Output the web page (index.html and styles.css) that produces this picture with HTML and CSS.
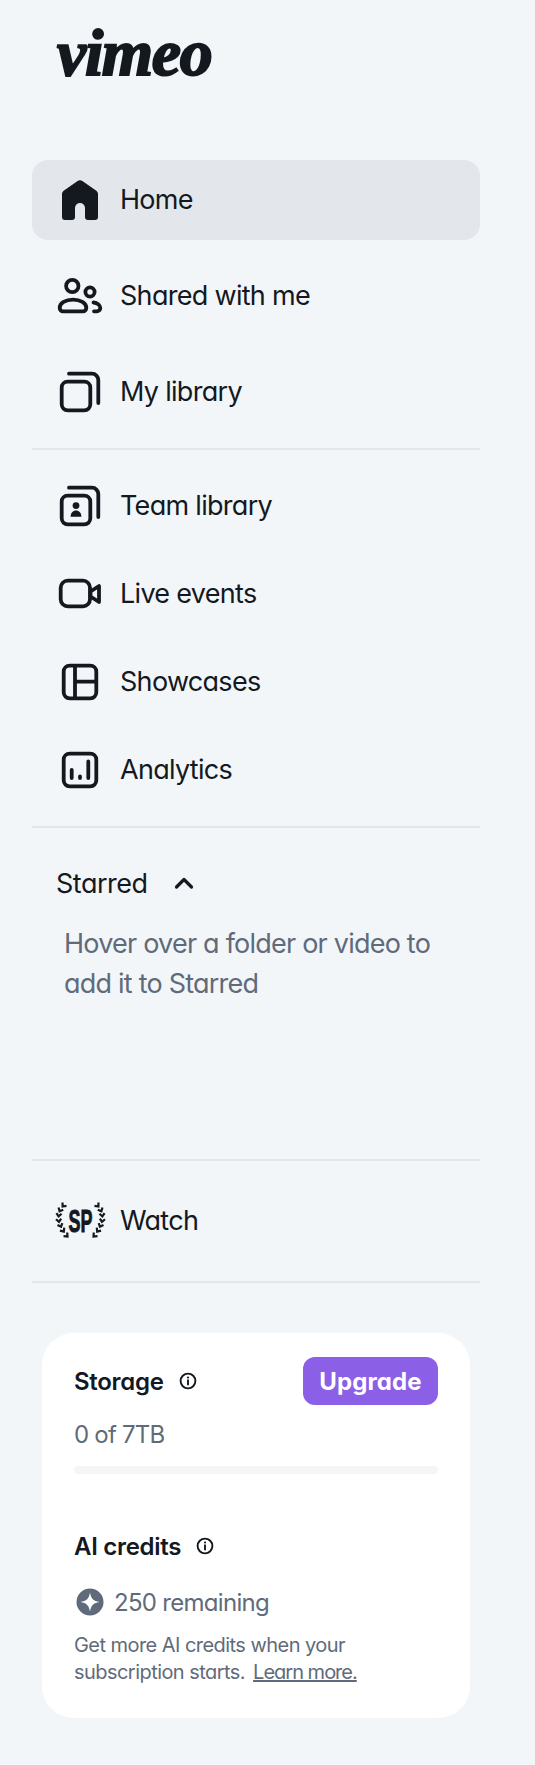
FILE: index.html
```html
<!DOCTYPE html>
<html lang="en">
<head>
  <meta charset="UTF-8" />
  <title>Vimeo</title>
  <link rel="stylesheet" href="styles.css">
</head>
<body>
  <aside class="sidebar">

    <div class="logo">vimeo</div>

    <!-- MAIN -->
    <nav class="nav-main">
      <a class="nav-row active">
        <svg class="icon" viewBox="0 0 48 48"><path class="solid" d="M21.6 5 L8 14.6 C6.7 15.5 6 16.8 6 18.3 V41 a3 3 0 0 0 3 3 H16 a3 3 0 0 0 3-3 V32 a5 5 0 0 1 10 0 V41 a3 3 0 0 0 3 3 H39 a3 3 0 0 0 3-3 V18.3 C42 16.8 41.3 15.5 40 14.6 L26.4 5 C25 4 23 4 21.6 5 Z"/></svg>
        <span>Home</span>
      </a>
      <a class="nav-row">
        <svg class="icon" viewBox="0 0 48 48"><circle class="line" cx="16.3" cy="14" r="6.2"/><circle class="line" cx="34" cy="20" r="4.6"/><path class="line" d="M7 39.3 H27 a3.3 3.3 0 0 0 3.3-3.3 c0-5-6-8.3-13.3-8.3 S3.7 31 3.7 36 a3.3 3.3 0 0 0 3.3 3.3 Z"/><path class="line" d="M37.5 30.5 c4 .5 6.8 2.8 6.8 5.5 c0 2-1.5 3.3-3.5 3.3 H38"/></svg>
        <span>Shared with me</span>
      </a>
      <a class="nav-row">
        <svg class="icon" viewBox="0 0 48 48"><rect class="line" x="5.7" y="13.7" width="28.6" height="28.6" rx="6"/><path class="line" d="M13 5.7 H36 a6.3 6.3 0 0 1 6.3 6.3 V35"/></svg>
        <span>My library</span>
      </a>
    </nav>

    <!-- TOOLS -->
    <nav class="nav-tools">
      <a class="nav-row">
        <svg class="icon" viewBox="0 0 48 48"><rect class="line" x="5.7" y="13.7" width="28.6" height="28.6" rx="6"/><path class="line" d="M13 5.7 H36 a6.3 6.3 0 0 1 6.3 6.3 V35"/><circle class="solid" cx="20" cy="23.6" r="3.4"/><path class="solid" d="M14.6 34.8 c0-4 2.4-6.4 5.4-6.4 s5.4 2.4 5.4 6.4 Z"/></svg>
        <span>Team library</span>
      </a>
      <a class="nav-row">
        <svg class="icon" viewBox="0 0 48 48"><rect class="line" x="4.7" y="10.7" width="29.3" height="25.6" rx="7"/><path class="line" d="M34.5 21.5 L43 16 V32 L34.5 26.5 Z"/></svg>
        <span>Live events</span>
      </a>
      <a class="nav-row">
        <svg class="icon" viewBox="0 0 48 48"><rect class="line" x="7.7" y="7.7" width="32.6" height="32.6" rx="6"/><path class="line" d="M19 8 V40 M19 23.7 H40"/></svg>
        <span>Showcases</span>
      </a>
      <a class="nav-row">
        <svg class="icon" viewBox="0 0 48 48"><rect class="line" x="7.7" y="7.7" width="32.6" height="32.6" rx="6"/><path class="line" d="M15.7 24 V32 M24 30.5 V32 M32.3 15.5 V32"/></svg>
        <span>Analytics</span>
      </a>
    </nav>

    <!-- STARRED -->
    <section class="starred">
      <div class="starred-head">
        <span>Starred</span>
        <svg class="chevron" viewBox="0 0 20 14"><path d="M2.5 11 L10 3.5 L17.5 11"/></svg>
      </div>
      <p class="starred-empty">Hover over a folder or video to add it to Starred</p>
    </section>

    <!-- WATCH -->
    <nav class="nav-watch">
      <a class="nav-row">
        <svg class="icon icon-sp" viewBox="0 0 48 48">
          <defs><path id="leaf" d="M-2.6 -1.6 L0 1.4 L2.6 -1.6"/></defs>
          <text class="sp-text" transform="translate(24.5 35) scale(.56 1)" text-anchor="middle">SP</text>
          <g id="laurel" class="leaves">
            <use href="#leaf" transform="translate(7.5 8.5) rotate(40)"/>
            <use href="#leaf" transform="translate(4.2 13) rotate(25)"/>
            <use href="#leaf" transform="translate(2.8 18) rotate(8)"/>
            <use href="#leaf" transform="translate(2.8 23.5) rotate(-8)"/>
            <use href="#leaf" transform="translate(4.5 28.5) rotate(-22)"/>
            <use href="#leaf" transform="translate(7 33.5) rotate(-35)"/>
            <use href="#leaf" transform="translate(10.5 38.5) rotate(-45)"/>
          </g>
          <use href="#laurel" transform="translate(49 0) scale(-1 1)"/>
        </svg>
        <span>Watch</span>
      </a>
    </nav>

    <!-- USAGE CARD -->
    <div class="usage-card">
      <div class="usage-top">
        <div class="usage-title">
          <strong>Storage</strong>
          <svg class="info" viewBox="0 0 18 18"><circle cx="9" cy="9" r="7.4"/><path d="M9 8.2 V12.6"/><circle class="info-dot" cx="9" cy="5.5" r="1.1"/></svg>
        </div>
        <button class="btn-upgrade">Upgrade</button>
      </div>
      <div class="usage-amount">0 of 7TB</div>
      <div class="usage-bar"></div>

      <div class="usage-title credits-title">
        <strong>AI credits</strong>
        <svg class="info" viewBox="0 0 18 18"><circle cx="9" cy="9" r="7.4"/><path d="M9 8.2 V12.6"/><circle class="info-dot" cx="9" cy="5.5" r="1.1"/></svg>
      </div>
      <div class="credits-left">
        <svg class="spark" viewBox="0 0 28 28"><circle cx="14" cy="14" r="13.5"/><path d="M14 4.5 C15 10.5 17.5 13 23.5 14 C17.5 15 15 17.5 14 23.5 C13 17.5 10.5 15 4.5 14 C10.5 13 13 10.5 14 4.5 Z"/></svg>
        <span>250 remaining</span>
      </div>
      <p class="credits-note">Get more AI credits when your subscription starts. <a>Learn more.</a></p>
    </div>

  </aside>
</body>
</html>
```

FILE: styles.css
```css
* {
  box-sizing: border-box;
}
body {
  font-family: 'Inter', 'Liberation Sans', sans-serif;
  font-feature-settings: "cv11" 1;
  margin: 0;
  padding: 0;
  background: #f3f6f9;
  color: #14191f;
}

.sidebar {
  width: 480px;
  height: 1765px;
  padding-left: 32px;
}

.logo {
  height: 160px;
  padding: 19px 0 0 25px;
  font-family: 'Liberation Serif', serif;
  font-style: italic;
  font-weight: bold;
  font-size: 66px;
  line-height: 68px;
  letter-spacing: -1.4px;
  -webkit-text-stroke: 2px #14191f;
}

.nav-row {
  display: flex;
  align-items: center;
  gap: 16px;
  padding-left: 24px;
  font-size: 27px;
  letter-spacing: -0.7px;
  border-radius: 16px;
}
.nav-row span { padding-bottom: 2px; }
.nav-row.active { background: #e3e7eb; }

.icon {
  width: 48px;
  height: 48px;
  flex-shrink: 0;
  overflow: visible;
}
.line {
  fill: none;
  stroke: #14191f;
  stroke-width: 3.8;
  stroke-linecap: round;
  stroke-linejoin: round;
}
.solid { fill: #14191f; }

.nav-main {
  display: flex;
  flex-direction: column;
  gap: 16px;
  padding-bottom: 16px;
  border-bottom: 2px solid #e3e7eb;
}
.nav-main .nav-row { height: 80px; }

.nav-tools {
  padding: 12px 0 12px;
  border-bottom: 2px solid #e3e7eb;
}
.nav-tools .nav-row { height: 88px; }

.starred {
  height: 333px;
  padding-top: 37px;
  border-bottom: 2px solid #e3e7eb;
}
.starred-head {
  display: flex;
  align-items: center;
  gap: 26px;
  height: 36px;
  padding-left: 24px;
  font-size: 27px;
  letter-spacing: -0.5px;
}
.chevron {
  width: 20px;
  height: 14px;
  fill: none;
  stroke: #14191f;
  stroke-width: 3.2;
  stroke-linecap: round;
  stroke-linejoin: round;
}
.starred-empty {
  margin: 23px 0 0 32px;
  width: 380px;
  font-size: 27px;
  line-height: 40px;
  letter-spacing: -0.78px;
  color: #5f6b7a;
}

.nav-watch {
  padding: 20px 0;
  border-bottom: 2px solid #e3e7eb;
}
.nav-watch .nav-row { height: 80px; }
.sp-text {
  font-family: 'Liberation Sans', sans-serif;
  font-weight: bold;
  font-size: 32px;
  letter-spacing: 0;
  fill: #14191f;
  stroke: #14191f;
  stroke-width: 1;
}
.leaves {
  fill: none;
  stroke: #14191f;
  stroke-width: 2.2;
}

.usage-card {
  width: 428px;
  height: 385px;
  margin: 50px 0 0 10px;
  padding: 24px 32px 0;
  background: #fff;
  border-radius: 32px;
}
.usage-top {
  display: flex;
  justify-content: space-between;
  align-items: center;
  height: 48px;
}
.usage-title {
  display: flex;
  align-items: center;
  gap: 15px;
  font-size: 24px;
  letter-spacing: -0.3px;
}
.usage-title strong { font-weight: 600; }
.info {
  width: 18px;
  height: 18px;
  fill: none;
  stroke: #14191f;
  stroke-width: 1.9;
  stroke-linecap: round;
}
.info-dot {
  fill: #14191f;
  stroke: none;
}
.btn-upgrade {
  width: 135px;
  height: 48px;
  padding: 0;
  border: none;
  border-radius: 12px;
  background: #8b5fe6;
  color: #fff;
  font-family: inherit;
  font-feature-settings: inherit;
  font-size: 24px;
  font-weight: 700;
  letter-spacing: 0.1px;
}
.usage-amount {
  margin-top: 14px;
  height: 32px;
  line-height: 32px;
  font-size: 24px;
  letter-spacing: -0.8px;
  color: #5f6b7a;
}
.usage-bar {
  height: 8px;
  margin-top: 15px;
  border-radius: 4px;
  background: #f3f5f7;
}
.credits-title {
  margin-top: 56px;
  height: 32px;
}
.credits-left {
  display: flex;
  align-items: center;
  gap: 10px;
  margin-top: 24px;
  height: 32px;
  font-size: 24px;
  letter-spacing: -0.7px;
  color: #5f6b7a;
}
.spark {
  width: 28px;
  height: 28px;
  margin-left: 2px;
}
.spark circle { fill: #5f6b7a; }
.spark path { fill: #fff; }
.credits-note {
  margin: 14px 0 0;
  font-size: 20px;
  line-height: 27px;
  letter-spacing: -0.55px;
  color: #5f6b7a;
}
.credits-note a {
  margin-left: 3px;
  letter-spacing: -1px;
  text-decoration: underline;
}
```
